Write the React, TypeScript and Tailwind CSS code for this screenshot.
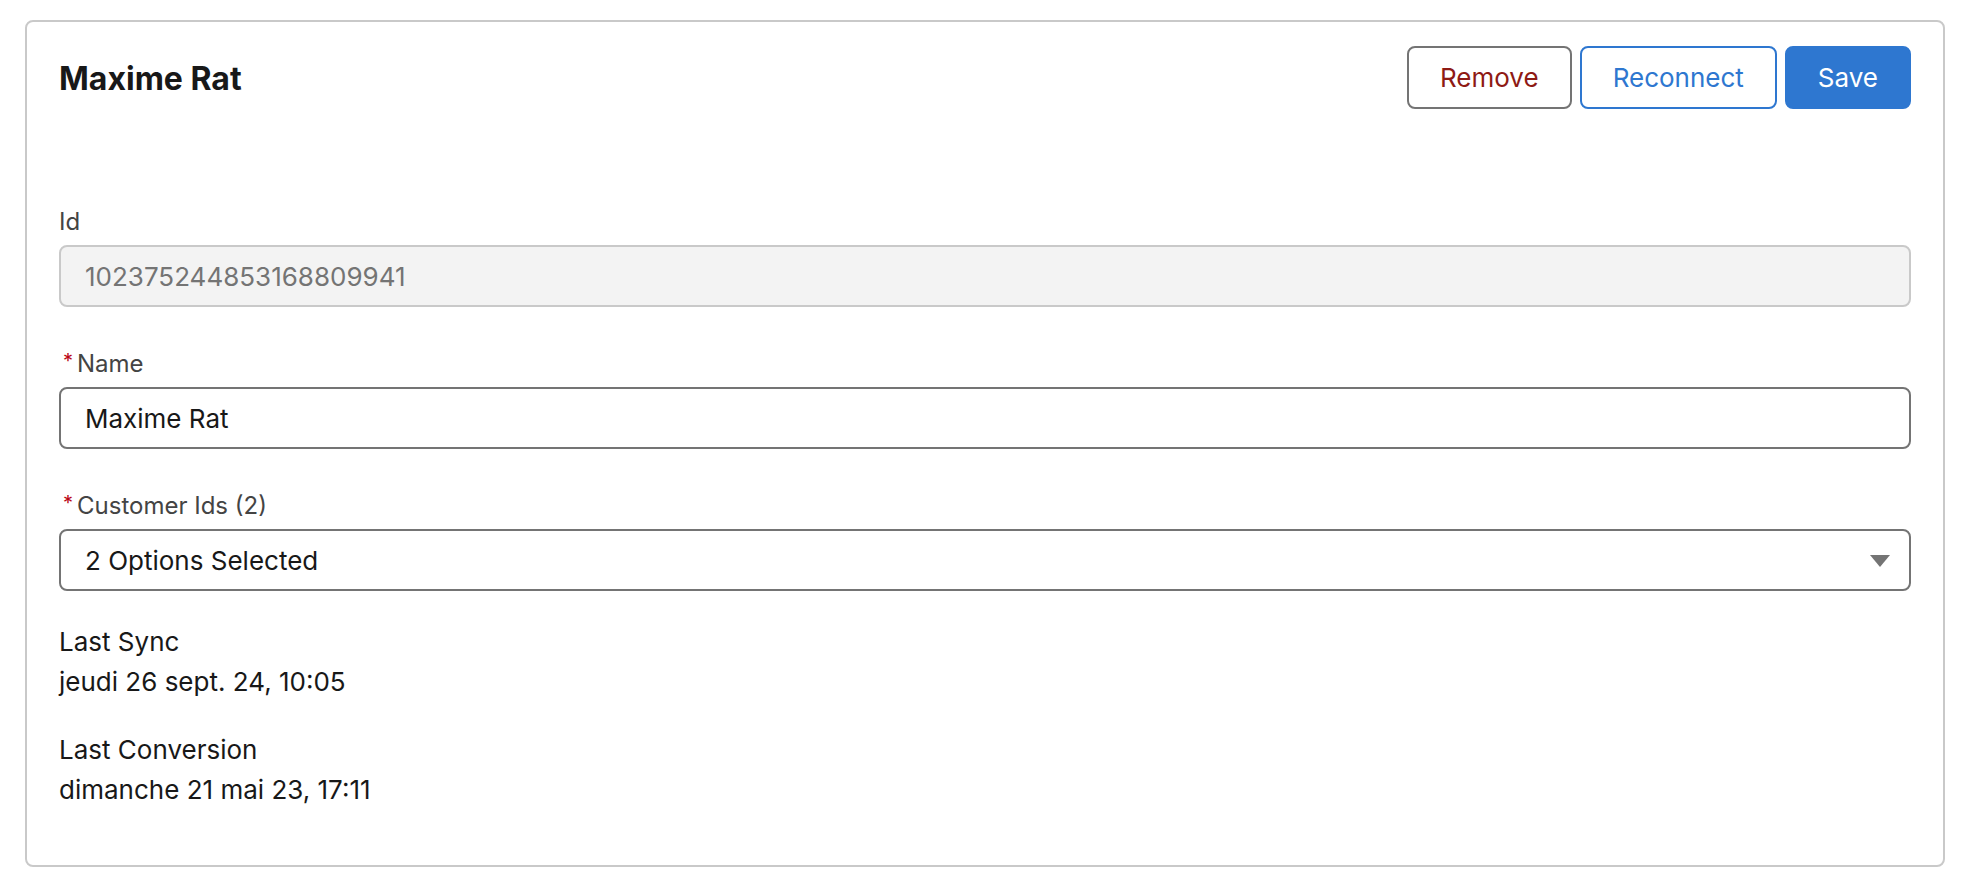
import { ReactNode } from 'react'

type FieldProps = {
  label: string
  required?: boolean
  className?: string
  children: ReactNode
}

function Field({ label, required, className = 'mb-[39px]', children }: FieldProps) {
  return (
    <div className={className}>
      <div className="flex h-[36px] items-center text-[24px] leading-[36px] text-[#444444]">
        {required && (
          <span className="mr-[4px] ml-[4px] -mt-[6px] text-[20px] leading-none text-[#ba0517]">*</span>
        )}
        {label}
      </div>
      <div className="mt-[5px]">{children}</div>
    </div>
  )
}

function ReadField({ label, value }: { label: string; value: string }) {
  return (
    <div>
      <div className="text-[26px] leading-[40px] text-[#181818]">{label}</div>
      <div className="text-[26px] leading-[40px] text-[#181818]">{value}</div>
    </div>
  )
}

export default function App() {
  return (
    <div
      className="min-h-screen bg-white px-[25px] pt-[20px]"
      style={{ fontFamily: 'Inter, "Liberation Sans", Arial, sans-serif' }}
    >
      <div className="rounded-[8px] border-2 border-[#c9c9c9] bg-white px-[32px] pt-[24px] pb-[55px]">
        <div className="flex items-center justify-between">
          <h2 className="mt-[2px] text-[32px] font-bold text-[#181818]">Maxime Rat</h2>
          <div className="flex gap-[8px]">
            <button className="h-[63px] rounded-[8px] border-2 border-[#747474] bg-white px-[31px] text-[26px] text-[#8e1a14]">
              Remove
            </button>
            <button className="h-[63px] rounded-[8px] border-2 border-[#2e77d0] bg-white px-[31px] text-[26px] text-[#2e77d0]">
              Reconnect
            </button>
            <button className="h-[63px] rounded-[8px] border-2 border-[#2e77d0] bg-[#2e77d0] px-[31px] text-[26px] text-white">
              Save
            </button>
          </div>
        </div>

        <div className="mt-[95px]">
          <Field label="Id">
            <div className="flex h-[62px] items-center rounded-[8px] border-2 border-[#c9c9c9] bg-[#f3f3f3] px-[24px] text-[26px] text-[#747474]">
              102375244853168809941
            </div>
          </Field>

          <Field label="Name" required>
            <div className="flex h-[62px] items-center rounded-[8px] border-2 border-[#747474] bg-white px-[24px] text-[26px] text-[#181818]">
              Maxime Rat
            </div>
          </Field>

          <Field label="Customer Ids (2)" required className="mb-0">
            <div className="flex h-[62px] items-center justify-between rounded-[8px] border-2 border-[#747474] bg-white pl-[24px] pr-[19px] text-[26px] text-[#181818]">
              <span>2 Options Selected</span>
              <svg width="20" height="12" viewBox="0 0 20 12" className="mt-[2px]">
                <path d="M0 0 H20 L10 12 Z" fill="#747474" />
              </svg>
            </div>
          </Field>

          <div className="mt-[31px]">
            <ReadField label="Last Sync" value="jeudi 26 sept. 24, 10:05" />
          </div>
          <div className="mt-[28px]">
            <ReadField label="Last Conversion" value="dimanche 21 mai 23, 17:11" />
          </div>
        </div>
      </div>
    </div>
  )
}
